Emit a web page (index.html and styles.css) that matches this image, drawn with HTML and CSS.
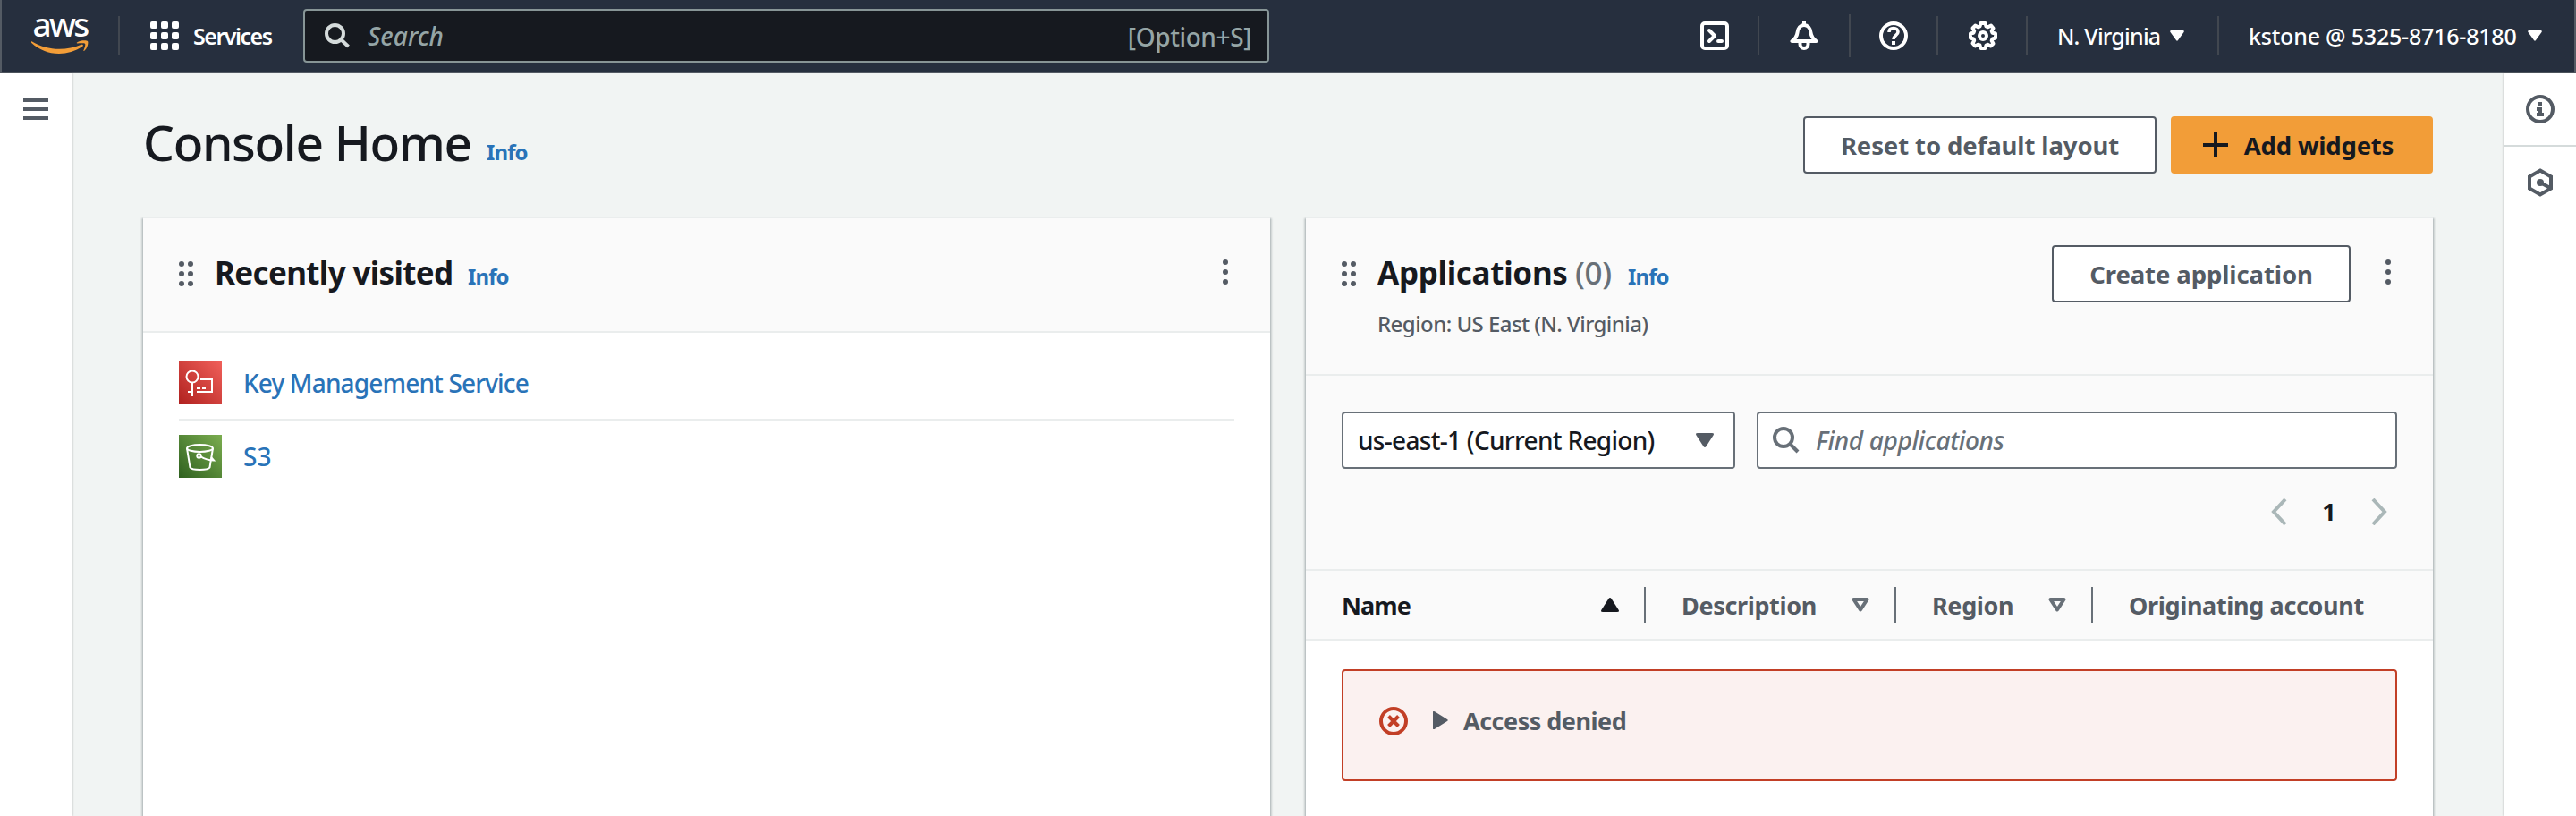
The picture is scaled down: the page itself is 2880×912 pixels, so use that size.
FILE: index.html
```html
<!DOCTYPE html>
<html lang="en">
<head>
<meta charset="utf-8">
<title>Console Home</title>
<link rel="stylesheet" href="styles.css">
</head>
<body>
<header class="nav">
  <div class="logo">
    <span class="logo-text">aws</span>
    <svg class="logo-smile" width="64" height="16" viewBox="0 0 64 16"><path d="M.5 1.3C17 11.5 38 12.500 56 4.800c1.500-.6 2.700.9 1.300 2C49 12.500 40 15 31 15 19 15 8.500 10.500.300 3-.3 2.300-.1.900.500 1.300z" fill="#f29d38"/><path d="M51 2.500c3.500-2.600 11-2.500 12-1.500s.2 7.500-3.700 10.800c-.6.500-1.200.200-.9-.4 1-2.200 2.500-6.500 1.700-7.500s-5.500-.7-8.500-.4c-.8.100-1.200-.5-.6-1z" fill="#f29d38"/></svg>
  </div>
  <i class="sep sep-logo"></i>
  <svg class="grid" width="32" height="32" fill="#fff"><rect width="8" height="8" rx="2"/><rect x="12" width="8" height="8" rx="2"/><rect x="24" width="8" height="8" rx="2"/><rect y="12" width="8" height="8" rx="2"/><rect x="12" y="12" width="8" height="8" rx="2"/><rect x="24" y="12" width="8" height="8" rx="2"/><rect y="24" width="8" height="8" rx="2"/><rect x="12" y="24" width="8" height="8" rx="2"/><rect x="24" y="24" width="8" height="8" rx="2"/></svg>
  <span class="services">Services</span>
  <div class="search">
    <svg width="28" height="28" fill="none" stroke="#d5dbdb" stroke-width="4"><circle cx="11.500" cy="11.500" r="9.500"/><path d="M18 18l8.500 8"/></svg>
    <span class="search-ph">Search</span>
    <span class="search-key">[Option+S]</span>
  </div>
  <div class="tools">
    <svg width="32" height="32" fill="none" stroke="#fff" stroke-width="4" stroke-linejoin="round"><rect x="2" y="2" width="28" height="28" rx="3"/><path d="M10 10l6 6-6 6M20 22h4" stroke-linecap="round"/></svg>
    <i class="sep s1"></i>
    <svg width="32" height="32" fill="none" stroke="#fff" stroke-width="4" stroke-linejoin="round"><path d="M2.500 22h27c-4-3-5.500-5-6-9.500C23 7.500 20 4 16 4s-7 3.500-7.500 8.500c-.5 4.500-2 6.500-6 9.500zM16 0v4M11.500 23v2.500a4.500 4.500 0 0 0 9 0V23"/></svg>
    <i class="sep s2"></i>
    <svg width="32" height="32" fill="none" stroke="#fff" stroke-width="4"><circle cx="16" cy="16" r="14"/><path d="M11 12c0-3 2-4.500 5-4.500s5 1.700 5 4.200c0 3.800-5 3.600-5 8.300" stroke-width="3.600"/><path d="M16 22v4"/></svg>
    <i class="sep s3"></i>
    <svg width="32" height="32" fill="none" stroke="#fff" stroke-width="4" stroke-linejoin="round"><path d="M13.500 2h5l1 3.500 2 .8L25 4.600 27.500 7.500l-1.800 3.200.8 2 3.500.8v5l-3.500 1-.8 2 1.800 3.200-3 2.800-3.200-1.700-1.800.7-1 3.500h-5l-1-3.500-2-.7-3.200 1.700-2.800-3 1.700-3.200-.7-1.800-3.500-1v-5l3.500-.8.700-2-1.700-3.200 2.800-2.900 3.200 1.700 2-.8z"/><circle cx="16" cy="16" r="4"/></svg>
    <i class="sep s4"></i>
    <span class="region">N. Virginia</span>
    <svg class="caret" width="16" height="12" fill="#fff"><path d="M1.500 0h13q2 0 1 2L9 11q-1 1.600-2 0L.5 2q-1-2 1-2z"/></svg>
    <i class="sep s5"></i>
    <span class="account">kstone @ 5325-8716-8180</span>
    <svg class="caret" width="16" height="12" fill="#fff"><path d="M1.500 0h13q2 0 1 2L9 11q-1 1.600-2 0L.5 2q-1-2 1-2z"/></svg>
  </div>
</header>
<div class="body">
  <aside class="left"><svg width="28" height="24" fill="#545b64"><path d="M0 0h28v4H0zM0 10h28v4H0zM0 20h28v4H0z"/></svg></aside>
  <main class="main">
    <div class="page-head">
      <h1>Console Home</h1><a class="info">Info</a>
      <div class="actions">
        <button class="btn reset"><span>Reset to default layout</span></button>
        <button class="btn primary"><svg width="28" height="28" stroke="#16191f" stroke-width="4"><path d="M14 0v28M0 14h28"/></svg><span>Add widgets</span></button>
      </div>
    </div>
    <div class="widgets">
      <section class="card">
        <div class="card-head short">
          <svg class="drag" width="16" height="28" fill="#545b64"><circle cx="3" cy="3" r="3"/><circle cx="13" cy="3" r="3"/><circle cx="3" cy="14" r="3"/><circle cx="13" cy="14" r="3"/><circle cx="3" cy="25" r="3"/><circle cx="13" cy="25" r="3"/></svg>
          <h2 class="t-recent">Recently visited</h2><a class="info">Info</a>
          <svg class="more" width="6" height="28" fill="#545b64"><circle cx="3" cy="3" r="3"/><circle cx="3" cy="14" r="3"/><circle cx="3" cy="25" r="3"/></svg>
        </div>
        <ul class="recent">
          <li><svg width="48" height="48" fill="none"><defs><linearGradient id="r" x1="0" y1="1" x2="1" y2="0"><stop stop-color="#b0211f"/><stop offset="1" stop-color="#f0605a"/></linearGradient></defs><path fill="url(#r)" d="M0 0h48v48H0z"/><g stroke="#fff" stroke-width="2"><circle cx="15" cy="17" r="6.500"/><path d="M15 23.500V39M10 34h5M24 20h13v14H20M20 30h4M26 30h4"/></g></svg><a class="t-kms">Key Management Service</a></li>
          <li><svg width="48" height="48" fill="none"><defs><linearGradient id="g" x1="0" y1="1" x2="1" y2="0"><stop stop-color="#2f611f"/><stop offset="1" stop-color="#7bad4f"/></linearGradient></defs><path fill="url(#g)" d="M0 0h48v48H0z"/><g stroke="#fff" stroke-width="2"><ellipse cx="23.500" cy="15" rx="14.500" ry="4"/><path d="M9 15l3.500 21.500c2 3.300 20 3.300 22 0L38 15"/><circle cx="22.500" cy="23.500" r="2.200"/><path d="M24.500 24.300c4 2.500 9 4 14.500 4.200l-3-3.500"/></g></svg><a class="t-s3">S3</a></li>
        </ul>
      </section>
      <section class="card">
        <div class="card-head tall">
          <svg class="drag" width="16" height="28" fill="#545b64"><circle cx="3" cy="3" r="3"/><circle cx="13" cy="3" r="3"/><circle cx="3" cy="14" r="3"/><circle cx="13" cy="14" r="3"/><circle cx="3" cy="25" r="3"/><circle cx="13" cy="25" r="3"/></svg>
          <div class="titles">
            <div class="title-row"><h2 class="t-apps">Applications</h2><span class="count">(0)</span><a class="info">Info</a></div>
            <p class="t-region">Region: US East (N. Virginia)</p>
          </div>
          <button class="btn create"><span>Create application</span></button>
          <svg class="more" width="6" height="28" fill="#545b64"><circle cx="3" cy="3" r="3"/><circle cx="3" cy="14" r="3"/><circle cx="3" cy="25" r="3"/></svg>
        </div>
        <div class="filters">
          <div class="controls">
            <div class="select"><span class="t-select">us-east-1 (Current Region)</span><svg width="20" height="16" fill="#545b64"><path d="M2 0h16q3 0 1.500 2.500l-8 12.500q-1.500 2-3 0L.5 2.500Q-1 0 2 0z"/></svg></div>
            <div class="find"><svg width="30" height="30" fill="none" stroke="#687078" stroke-width="4"><circle cx="12" cy="12" r="10"/><path d="M19 19l9 9"/></svg><span class="t-find">Find applications</span></div>
          </div>
          <div class="pages">
            <svg width="18" height="30" fill="none" stroke="#aab7b8" stroke-width="4"><path d="M16 1L3 15l13 14"/></svg>
            <b>1</b>
            <svg width="18" height="30" fill="none" stroke="#aab7b8" stroke-width="4"><path d="M2 1l13 14L2 29"/></svg>
          </div>
        </div>
        <div class="thead">
          <div class="th c1"><span>Name</span><svg width="20" height="16" fill="#16191f"><path d="M2 16h16q3 0 1.500-2.500L11.500 1q-1.500-2-3 0L.5 13.500Q-1 16 2 16z"/></svg></div>
          <div class="th c2"><span>Description</span><svg width="20" height="16" fill="none" stroke="#687078" stroke-width="4" stroke-linejoin="round"><path d="M2.500 2h15L10 13.500z"/></svg></div>
          <div class="th c3"><span>Region</span><svg width="20" height="16" fill="none" stroke="#687078" stroke-width="4" stroke-linejoin="round"><path d="M2.500 2h15L10 13.500z"/></svg></div>
          <div class="th c4"><span>Originating account</span></div>
        </div>
        <div class="alert">
          <svg width="32" height="32" fill="none" stroke="#c23f26" stroke-width="4"><circle cx="16" cy="16" r="14"/><path d="M10.500 10.500l11 11M21.500 10.500l-11 11"/></svg>
          <svg class="tri" width="17" height="20" fill="#545b64"><path d="M0 1q0-2 2-.7L16 9q1.500 1 0 2L2 19.700Q0 21 0 19z"/></svg>
          <b class="t-alert">Access denied</b>
        </div>
      </section>
    </div>
  </main>
  <aside class="right">
    <div class="tool"><svg width="32" height="32" fill="none" stroke="#545b64" stroke-width="4"><circle cx="16" cy="16" r="14"/><path d="M14 10h4M12 16h6M12 22h8M16 14v9"/></svg></div>
    <div class="tool"><svg width="32" height="32" fill="none" stroke="#545b64" stroke-width="4"><path d="M16 2.500l12 7v13l-12 7-12-7v-13zM16 16l12 6.500"/><circle cx="16" cy="16" r="4" fill="#545b64" stroke="none"/></svg></div>
  </aside>
</div>
</body>
</html>
```
FILE: styles.css
```css
* { box-sizing: border-box; }
body { margin: 0; width: 2880px; height: 912px; overflow: hidden; background: #f1f4f3; color: #16191f; font: 500 28px/40px "Noto Sans", "Open Sans", sans-serif; display: flex; flex-direction: column; }
h1, h2, p, ul { margin: 0; padding: 0; }
svg, span, i, a, b, h1, h2 { flex: none; display: block; white-space: nowrap; }
.nav { height: 82px; flex: none; display: flex; align-items: center; background: #262f3e; border: solid #545b64; border-width: 0 2px 2px; color: #fff; font-size: 25px; font-weight: 500; }
.logo { width: 64px; height: 41px; margin-left: 33px; display: flex; flex-direction: column; align-items: center; justify-content: space-between; }
.logo-text { font-size: 37px; line-height: 24px; height: 24px; margin-top: -5px; letter-spacing: -2.6px; }
.logo-smile { flex: none; }
.sep { width: 2px; height: 44px; background: #414750; }
.sep-logo { margin-left: 33px; }
.grid { margin-left: 34px; }
.services { width: 139px; padding-left: 16px; letter-spacing: -1.5px; font-weight: 600; }
.search { width: 1080px; height: 60px; display: flex; align-items: center; border: 2px solid #879596; border-radius: 4px; background: #16191f; color: #95a5a6; font-size: 28px; padding: 0 18px 0 22px; }
.search-ph { margin-left: 20px; font-style: italic; flex: 1; }
.search-key { letter-spacing: -.4px; padding-top: 1px; }
.tools { display: flex; align-items: center; margin-left: 482px; }
.s1 { margin: 0 34px 0 32px; }
.s2 { margin: 0 32px 0 34px; height: 48px; }
.s3 { margin: 0 34px 0 32px; }
.s4 { margin: 0 33px 0 32px; }
.region { width: 126px; letter-spacing: -.8px; }
.s5 { margin: 0 33px 0 37px; }
.account { width: 312px; letter-spacing: -.2px; }
.body { flex: 1; display: flex; min-height: 0; }
.left { width: 80px; background: #fff; padding: 28px 26px; box-shadow: 1px 0 2px #0004; }
.main { width: 2720px; padding: 48px 80px 0; }
.page-head { height: 112px; display: flex; }
h1 { font-size: 55px; line-height: 57px; font-weight: 500; width: 384px; letter-spacing: -1.3px; }
.info { color: #2973b8; font-size: 24px; font-weight: 700; line-height: 40px; letter-spacing: -.9px; }
.page-head .info { margin-top: 20px; }
.actions { display: flex; gap: 16px; margin-left: auto; }
.btn { height: 64px; border: 2px solid #545b64; border-radius: 4px; background: #fff; color: #545b64; font: bold 27.5px/40px "Noto Sans", sans-serif; letter-spacing: -.1px; padding: 1px 0 0; display: flex; align-items: center; justify-content: center; }
.reset { width: 395px; }
.primary { width: 293px; background: #f29d38; border-color: #f29d38; color: #16191f; gap: 18px; padding-right: 8px; letter-spacing: -.2px; }
.primary svg { margin-top: -1px; }
.widgets { display: flex; gap: 40px; }
.card { width: 1260px; height: 680px; background: #fff; border-top: 2px solid #eaeded; box-shadow: 0 2px 2px rgba(0,28,36,.3), 2px 2px 2px rgba(0,28,36,.15), -2px 2px 2px rgba(0,28,36,.15); }
.card-head { display: flex; background: #fafafa; border-bottom: 2px solid #eaeded; padding: 30px 47px 0 40px; }
.short { height: 128px; }
.tall { height: 176px; }
.drag { margin: 18px 24px 0 0; }
.more { margin: 16px 0 0 auto; }
h2 { font-size: 35px; line-height: 62px; font-weight: 700; }
.t-recent { width: 283px; letter-spacing: -.65px; }
.card .info { line-height: 64px; margin-top: 3px; }
.recent { list-style: none; padding: 16px 40px; }
.recent li { display: flex; height: 80px; align-items: center; gap: 24px; color: #2973b8; }
.recent li + li { border-top: 2px solid #eaeded; height: 82px; }
.t-kms { letter-spacing: -.85px; }
.titles { width: 754px; }
.title-row { display: flex; height: 64px; }
.t-apps { width: 221px; letter-spacing: -.3px; }
.count { width: 59px; font-size: 35px; line-height: 62px; color: #687078; letter-spacing: -.3px; }
.t-region { font-size: 24px; line-height: 48px; color: #545b64; letter-spacing: -.55px; }
.create { width: 334px; }
.filters { height: 218px; background: #fafafa; border-bottom: 2px solid #eaeded; padding: 40px 40px 0; }
.controls { display: flex; gap: 24px; }
.select, .find { height: 64px; display: flex; align-items: center; border: 2px solid #687078; border-radius: 4px; background: #fff; }
.select { width: 440px; justify-content: space-between; padding: 0 22px 0 16px; letter-spacing: -.7px; }
.find { flex: 1; padding: 0 16px; gap: 18px; color: #687078; font-style: italic; letter-spacing: -.35px; }
.pages { display: flex; justify-content: flex-end; align-items: center; height: 32px; margin-top: 32px; padding-right: 11px; }
.pages b { width: 94px; text-align: center; font-size: 27px; }
.thead { height: 78px; display: flex; align-items: center; background: #fafafa; border-bottom: 2px solid #eaeded; padding-left: 40px; font-size: 27px; font-weight: 700; color: #545b64; letter-spacing: -.35px; }
.th { height: 40px; display: flex; align-items: center; justify-content: space-between; border-right: 2px solid #687078; padding-right: 28px; }
.th span { padding-top: 1px; }
.c1 { width: 340px; color: #16191f; letter-spacing: -.9px; }
.c2 { width: 280px; padding-left: 40px; }
.c3 { width: 220px; padding-left: 40px; }
.c4 { border: 0; padding-left: 40px; }
.alert { margin: 32px 40px 0; height: 125px; border: 2px solid #c23f26; border-radius: 4px; background: #fbf1f0; color: #545b64; padding: 40px; display: flex; font-size: 27px; letter-spacing: -.5px; }
.alert svg { margin-right: 28px; }
.alert .tri { margin: 5px 17px 0 0; }
.t-alert { line-height: 32px; }
.right { flex: 1; background: #fff; box-shadow: -1px 0 2px #0004; }
.tool { height: 82px; padding: 24px; border-bottom: 2px solid #d5dbdb; }
.tool + .tool { border: 0; }
```
